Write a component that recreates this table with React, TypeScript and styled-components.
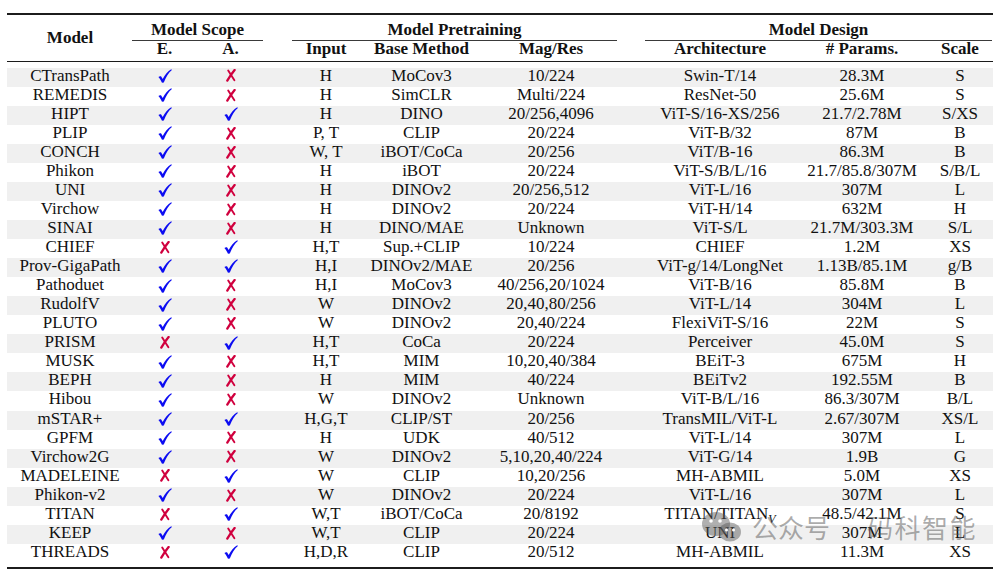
import React from 'react';
import styled, { createGlobalStyle } from 'styled-components';

const GlobalStyle = createGlobalStyle`
  body {
    margin: 0;
    background: #ffffff;
    font-family: "Liberation Serif", "Times New Roman", serif;
    color: #111111;
  }
`;

// column tracks, tuned so each column is centred where the paper has it
const COLS = '126px 63px 69px 122px 69px 190px 148px 136px 60px 3px';

const Page = styled.div`
  position: relative;
  width: 1005px;
  height: 576px;
  padding: 13px 0 0 7px;
  box-sizing: border-box;
`;

const Table = styled.div`
  width: 986px;
  font-size: 17px;
`;

const Rule = styled.div<{ $h: number; $top?: number }>`
  height: ${p => p.$h}px;
  margin-top: ${p => p.$top ?? 0}px;
  background: #1c1c1c;
`;

const HeaderGrid = styled.div`
  display: grid;
  grid-template-columns: ${COLS};
  grid-template-rows: 26px 20px;
  font-weight: bold;
`;

const ModelHead = styled.div`
  grid-column: 1;
  grid-row: 1 / span 2;
  display: flex;
  align-items: center;
  justify-content: center;
  line-height: 16px;
`;

const GroupHead = styled.div<{ $col: string; $ml: number; $mr: number }>`
  grid-column: ${p => p.$col};
  grid-row: 1;
  margin: 0 ${p => p.$mr}px 0 ${p => p.$ml}px;
  box-sizing: border-box;
  border-bottom: 1px solid #3a3a3a;
  padding-top: 4.5px;
  line-height: 19px;
  text-align: center;
  white-space: nowrap;
`;

const SubHead = styled.div<{ $col: number }>`
  grid-column: ${p => p.$col};
  grid-row: 2;
  display: flex;
  justify-content: center;
  line-height: 16px;
  white-space: nowrap;
`;

const Body = styled.div`
  margin-top: 5.7px;
`;

const Row = styled.div<{ $alt: boolean }>`
  display: grid;
  grid-template-columns: ${COLS};
  height: 19.05px;
  line-height: 16px;
  background: ${p => (p.$alt ? '#f0f0f0' : 'transparent')};
`;

const Cell = styled.div`
  display: flex;
  justify-content: center;
  white-space: nowrap;
`;

const MarkCell = styled(Cell)`
  padding-top: 1.3px;
`;

const Sub = styled.sub`
  font-style: italic;
  font-size: 12px;
  line-height: 0;
  vertical-align: -4px;
`;

const Watermark = styled.div`
  position: absolute;
  left: 701px;
  top: 510px;
  display: flex;
  align-items: center;
  pointer-events: none;
  color: rgba(80, 80, 80, 0.48);
  font-family: "Noto Sans CJK SC", "Noto Sans", sans-serif;
  font-size: 26px;
  line-height: 26px;
`;

const MarkText = styled.span<{ $ml: number; $ls: number }>`
  margin-left: ${p => p.$ml}px;
  letter-spacing: ${p => p.$ls}px;
`;

const Check = () => (
  <svg width="14" height="14" viewBox="0 0 14 14">
    <path
      d="M0.4 8.0 C1.3 7.2 2.3 7.0 3.0 7.3 L4.7 10.0 C6.9 5.8 9.8 2.2 13.2 0.2 L13.9 1.0 C10.6 3.8 7.9 8.0 5.8 13.6 L4.0 13.8 C3.0 11.6 1.9 9.5 0.4 8.0 Z"
      fill="#0c0cf2"
    />
  </svg>
);

const Cross = () => (
  <svg width="10" height="13" viewBox="0 0 10 13" style={{ marginTop: 0.5 }}>
    <path d="M2.2 1.6 Q4.8 5.8 8.4 11.2" stroke="#d0003e" strokeWidth="1.9" strokeLinecap="round" fill="none" />
    <path d="M8.6 1 Q5 5.4 1.3 11.6" stroke="#d0003e" strokeWidth="2.3" strokeLinecap="round" fill="none" />
  </svg>
);

const WeChatIcon = () => (
  <svg width="42" height="34" viewBox="0 0 42 34">
    <ellipse cx="15" cy="14" rx="14" ry="12" fill="rgba(90,90,90,0.48)" />
    <ellipse cx="29" cy="22" rx="11" ry="9.5" fill="rgba(90,90,90,0.48)" />
    <circle cx="10" cy="11" r="1.8" fill="#fff" />
    <circle cx="19" cy="11" r="1.8" fill="#fff" />
    <circle cx="25.5" cy="20" r="1.5" fill="#fff" />
    <circle cx="32.5" cy="20" r="1.5" fill="#fff" />
  </svg>
);

type Entry = [string, boolean, boolean, string, string, string, React.ReactNode, string, string];

const rows: Entry[] = [
  ['CTransPath', true, false, 'H', 'MoCov3', '10/224', 'Swin-T/14', '28.3M', 'S'],
  ['REMEDIS', true, false, 'H', 'SimCLR', 'Multi/224', 'ResNet-50', '25.6M', 'S'],
  ['HIPT', true, true, 'H', 'DINO', '20/256,4096', 'ViT-S/16-XS/256', '21.7/2.78M', 'S/XS'],
  ['PLIP', true, false, 'P, T', 'CLIP', '20/224', 'ViT-B/32', '87M', 'B'],
  ['CONCH', true, false, 'W, T', 'iBOT/CoCa', '20/256', 'ViT/B-16', '86.3M', 'B'],
  ['Phikon', true, false, 'H', 'iBOT', '20/224', 'ViT-S/B/L/16', '21.7/85.8/307M', 'S/B/L'],
  ['UNI', true, false, 'H', 'DINOv2', '20/256,512', 'ViT-L/16', '307M', 'L'],
  ['Virchow', true, false, 'H', 'DINOv2', '20/224', 'ViT-H/14', '632M', 'H'],
  ['SINAI', true, false, 'H', 'DINO/MAE', 'Unknown', 'ViT-S/L', '21.7M/303.3M', 'S/L'],
  ['CHIEF', false, true, 'H,T', 'Sup.+CLIP', '10/224', 'CHIEF', '1.2M', 'XS'],
  ['Prov-GigaPath', true, true, 'H,I', 'DINOv2/MAE', '20/256', 'ViT-g/14/LongNet', '1.13B/85.1M', 'g/B'],
  ['Pathoduet', true, false, 'H,I', 'MoCov3', '40/256,20/1024', 'ViT-B/16', '85.8M', 'B'],
  ['RudolfV', true, false, 'W', 'DINOv2', '20,40,80/256', 'ViT-L/14', '304M', 'L'],
  ['PLUTO', true, false, 'W', 'DINOv2', '20,40/224', 'FlexiViT-S/16', '22M', 'S'],
  ['PRISM', false, true, 'H,T', 'CoCa', '20/224', 'Perceiver', '45.0M', 'S'],
  ['MUSK', true, false, 'H,T', 'MIM', '10,20,40/384', 'BEiT-3', '675M', 'H'],
  ['BEPH', true, false, 'H', 'MIM', '40/224', 'BEiTv2', '192.55M', 'B'],
  ['Hibou', true, false, 'W', 'DINOv2', 'Unknown', 'ViT-B/L/16', '86.3/307M', 'B/L'],
  ['mSTAR+', true, true, 'H,G,T', 'CLIP/ST', '20/256', 'TransMIL/ViT-L', '2.67/307M', 'XS/L'],
  ['GPFM', true, false, 'H', 'UDK', '40/512', 'ViT-L/14', '307M', 'L'],
  ['Virchow2G', true, false, 'W', 'DINOv2', '5,10,20,40/224', 'ViT-G/14', '1.9B', 'G'],
  ['MADELEINE', false, true, 'W', 'CLIP', '10,20/256', 'MH-ABMIL', '5.0M', 'XS'],
  ['Phikon-v2', true, false, 'W', 'DINOv2', '20/224', 'ViT-L/16', '307M', 'L'],
  ['TITAN', false, true, 'W,T', 'iBOT/CoCa', '20/8192', <span>TITAN/TITAN<Sub>V</Sub></span>, '48.5/42.1M', 'S'],
  ['KEEP', true, false, 'W,T', 'CLIP', '20/224', 'UNI', '307M', 'L'],
  ['THREADS', false, true, 'H,D,R', 'CLIP', '20/512', 'MH-ABMIL', '11.3M', 'XS'],
];

const subHeads = ['E.', 'A.', 'Input', 'Base Method', 'Mag/Res', 'Architecture', '# Params.', 'Scale'];

export default function App() {
  return (
    <Page>
      <GlobalStyle />
      <Table>
        <Rule $h={2} />
        <HeaderGrid>
          <ModelHead>Model</ModelHead>
          <GroupHead $col="2 / span 2" $ml={-1} $mr={2}>Model Scope</GroupHead>
          <GroupHead $col="4 / span 3" $ml={27} $mr={29}>Model Pretraining</GroupHead>
          <GroupHead $col="7 / span 4" $ml={-1} $mr={1}>Model Design</GroupHead>
          {subHeads.map((h, i) => (
            <SubHead key={h} $col={i + 2}>{h}</SubHead>
          ))}
        </HeaderGrid>
        <Rule $h={1} />
        <Body>
          {rows.map((r, i) => (
            <Row key={r[0]} $alt={i % 2 === 0}>
              <Cell>{r[0]}</Cell>
              <MarkCell>{r[1] ? <Check /> : <Cross />}</MarkCell>
              <MarkCell>{r[2] ? <Check /> : <Cross />}</MarkCell>
              <Cell>{r[3]}</Cell>
              <Cell>{r[4]}</Cell>
              <Cell>{r[5]}</Cell>
              <Cell>{r[6]}</Cell>
              <Cell>{r[7]}</Cell>
              <Cell>{r[8]}</Cell>
              <Cell />
            </Row>
          ))}
        </Body>
        <Rule $h={2} $top={3.7} />
      </Table>
      <Watermark>
        <WeChatIcon />
        <MarkText $ml={9} $ls={0}>公众号</MarkText>
        <MarkText $ml={37} $ls={1.5}>码科智能</MarkText>
      </Watermark>
    </Page>
  );
}
